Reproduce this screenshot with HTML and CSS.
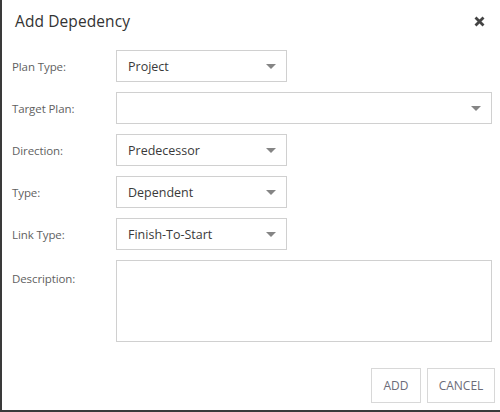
FILE: index.html
```html
<!DOCTYPE html>
<html>
<head>
<meta charset="utf-8">
<link rel="stylesheet" href="styles.css">
</head>
<body>
<div class="dialog">
  <div class="header">
    <div class="title">Add Depedency</div>
    <svg class="close" width="11" height="11" viewBox="0 0 11 11"><path d="M1.5 1.5 L9.5 9.5 M9.5 1.5 L1.5 9.5" stroke="#444" stroke-width="2.8" stroke-linecap="butt"/></svg>
  </div>
  <div class="form">
    <div class="label">Plan Type:</div>
    <div class="select small"><span>Project</span><i class="arrow"></i></div>
    <div class="label">Target Plan:</div>
    <div class="select wide"><span></span><i class="arrow"></i></div>
    <div class="label">Direction:</div>
    <div class="select small"><span>Predecessor</span><i class="arrow"></i></div>
    <div class="label">Type:</div>
    <div class="select small"><span>Dependent</span><i class="arrow"></i></div>
    <div class="label">Link Type:</div>
    <div class="select small"><span>Finish-To-Start</span><i class="arrow"></i></div>
    <div class="label top">Description:</div>
    <div class="textarea"></div>
  </div>
  <div class="footer">
    <div class="btn add">ADD</div>
    <div class="btn cancel">CANCEL</div>
  </div>
</div>
</body>
</html>
```
FILE: styles.css
```css
* { box-sizing: border-box; }
html, body { margin: 0; padding: 0; background: #fff; }
body { font-family: "Open Sans", "Noto Sans", sans-serif; }
.dialog {
  width: 500px;
  height: 412px;
  border-left: 2px solid #3a3a3a;
  border-bottom: 2px solid #3a3a3a;
  background: #fff;
  padding: 0 8px 0 10px;
}
.header {
  height: 50px;
  display: flex;
  align-items: center;
  justify-content: space-between;
  padding: 0 5px 8px 3px;
}
.title { font-size: 15.5px; color: #333; letter-spacing: 0.1px; }
.close { display: block; margin-right: 2px; margin-top: 0; }
.form {
  display: grid;
  grid-template-columns: 104px 1fr;
  row-gap: 10px;
  align-items: center;
}
.label { font-size: 11.5px; color: #5f5f5f; letter-spacing: -0.1px; }
.label.top { align-self: start; padding-top: 11px; }
.select {
  height: 32px;
  border: 1px solid #d0d0d0;
  display: flex;
  align-items: center;
  justify-content: space-between;
  padding: 0 10px 0 11px;
  font-size: 12.5px;
  color: #3a3a3a;
}
.select.small { width: 171px; }
.select.wide { width: 376px; }
.arrow {
  width: 0; height: 0;
  border-left: 5px solid transparent;
  border-right: 5px solid transparent;
  border-top: 5px solid #858585;
}
.textarea {
  height: 82px;
  width: 376px;
  border: 1px solid #d0d0d0;
}
.footer {
  display: flex;
  justify-content: flex-end;
  gap: 6px;
  margin-top: 26px;
  margin-right: -3px;
}
.btn {
  height: 35px;
  border: 1px solid #d8d8d8;
  display: flex;
  align-items: center;
  justify-content: center;
  font-size: 12px;
  color: #6b6b78;
}
.btn.add { width: 50px; }
.btn.cancel { width: 68px; }
```
